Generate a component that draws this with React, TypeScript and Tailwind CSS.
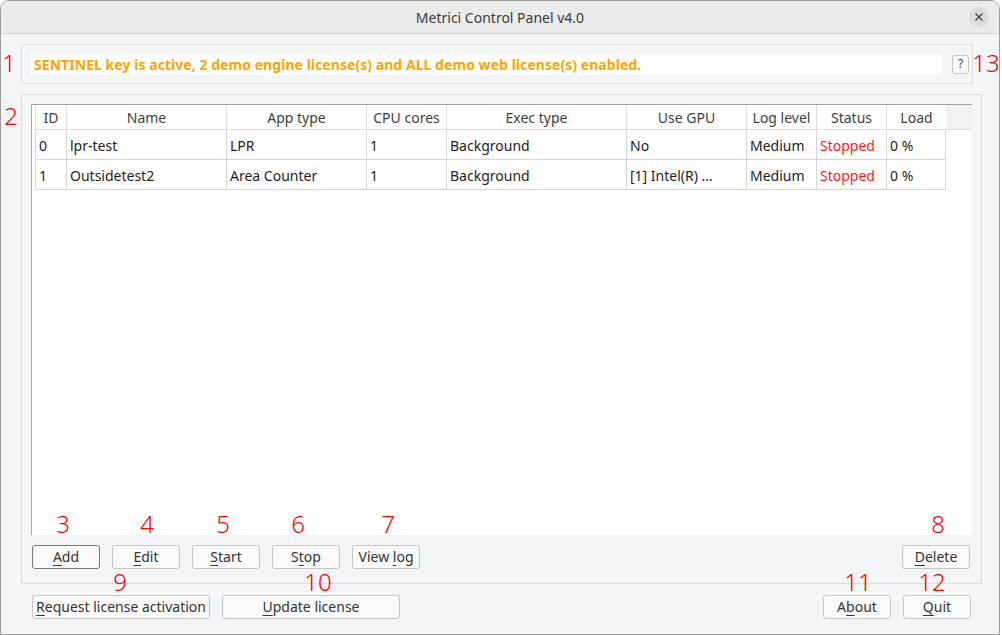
import React from 'react';

const FONT = { fontFamily: '"Noto Sans", "Open Sans", sans-serif' };

type Row = { id: string; name: string; app: string; cpu: string; exec: string; gpu: string; log: string; status: string; load: string };

const rows: Row[] = [
  { id: '0', name: 'lpr-test', app: 'LPR', cpu: '1', exec: 'Background', gpu: 'No', log: 'Medium', status: 'Stopped', load: '0 %' },
  { id: '1', name: 'Outsidetest2', app: 'Area Counter', cpu: '1', exec: 'Background', gpu: '[1] Intel(R) …', log: 'Medium', status: 'Stopped', load: '0 %' },
];

const cols = [
  { key: 'id', label: 'ID', w: 'w-[31px]' },
  { key: 'name', label: 'Name', w: 'w-[160px]' },
  { key: 'app', label: 'App type', w: 'w-[140px]' },
  { key: 'cpu', label: 'CPU cores', w: 'w-[80px]' },
  { key: 'exec', label: 'Exec type', w: 'w-[180px]' },
  { key: 'gpu', label: 'Use GPU', w: 'w-[120px]' },
  { key: 'log', label: 'Log level', w: 'w-[70px]' },
  { key: 'status', label: 'Status', w: 'w-[70px]' },
  { key: 'load', label: 'Load', w: 'w-[60px]' },
] as const;

// label with one underlined mnemonic letter
const Btn = ({ pre, u, post, w, primary }: { pre?: string; u: string; post?: string; w: string; primary?: boolean }) => (
  <button
    className={`${w} h-[24px] shrink-0 rounded-[3px] border bg-[#fafafa] text-[14px] leading-none text-[#353535] flex items-center justify-center ${
      primary ? 'border-[#7a7a7a]' : 'border-[#c6c6c6]'
    }`}
  >
    <span>
      {pre}
      <span className="underline underline-offset-[3px]">{u}</span>
      {post}
    </span>
  </button>
);

const Mark = ({ n, x, y }: { n: string; x: number; y: number }) => (
  <span
    className="absolute -translate-x-1/2 text-[24px] leading-none font-light text-[#ff0000]"
    style={{ left: x, top: y }}
  >
    {n}
  </span>
);

export default function App() {
  return (
    <div style={FONT} className="relative w-[1002px] h-[635px] overflow-hidden">
      <div className="w-[1000px] h-[635px] flex flex-col border border-[#9e9e9e] rounded-t-[9px] overflow-hidden bg-[#f4f5f6]">
        {/* title bar */}
        <div className="relative h-[33px] shrink-0 bg-[#ebebeb] border-b border-[#d3d3d3] flex items-center justify-center text-[14px] text-[#3a3a3a]">
          Metrici Control Panel v4.0
          <div className="absolute right-[10px] top-[6px] w-[20px] h-[20px] rounded-full bg-[#dcdcdc] flex items-center justify-center">
            <svg width="8" height="8" viewBox="0 0 8 8">
              <path d="M0.5 0.5 L7.5 7.5 M7.5 0.5 L0.5 7.5" stroke="#3a3a3a" strokeWidth="1.2" />
            </svg>
          </div>
        </div>

        <div className="flex-1 pl-[20px] pt-[10px]">
          {/* license status */}
          <div className="w-[952px] h-[40px] border border-[#dcdddf] flex items-center pl-[9px]">
            <div className="w-[911px] h-[21px] bg-white flex items-center pl-[3px] text-[14px] font-bold text-[#ffa400] tracking-[0.05px] whitespace-nowrap">
              SENTINEL key is active, 2 demo engine license(s) and ALL demo web license(s) enabled.
            </div>
            <div className="ml-[10px] w-[17px] h-[19px] rounded-[3px] border border-[#c6c6c6] bg-[#fafafa] flex items-center justify-center text-[12px] text-[#444]">
              ?
            </div>
          </div>

          {/* engines group */}
          <div className="mt-[10px] w-[961px] h-[490px] border border-[#dcdddf] pl-[9px] pr-[11px] pt-[9px] flex flex-col">
            <div className="w-[941px] h-[431px] bg-white border-l border-t border-[#a5a5a5] pl-[3px] text-[14px]">
              <div className="flex h-[25px] border-b border-[#dcdcdc] text-[#3f3f3f]">
                {cols.map((c) => (
                  <div key={c.key} className={`${c.w} shrink-0 border-l border-[#dcdcdc] flex items-center justify-center whitespace-nowrap`}>
                    {c.label}
                  </div>
                ))}
                <div className="flex-1 bg-[#f2f2f2]" />
              </div>
              {rows.map((r) => (
                <div key={r.id} className="flex h-[30px] w-[911px] border-b border-[#d6d6d6] text-[#1e1e1e]">
                  {cols.map((c) => (
                    <div
                      key={c.key}
                      className={`${c.w} shrink-0 border-l border-[#d6d6d6] flex items-center pl-[3px] pt-[1px] whitespace-nowrap last:border-r ${
                        c.key === 'status' ? 'text-[#ff1a1a]' : ''
                      }`}
                    >
                      {r[c.key]}
                    </div>
                  ))}
                </div>
              ))}
            </div>
            <div className="mt-[10px] pl-[1px] flex gap-[12px]">
              <Btn w="w-[68px]" u="A" post="dd" primary />
              <Btn w="w-[68px]" u="E" post="dit" />
              <Btn w="w-[68px]" u="S" post="tart" />
              <Btn w="w-[68px]" pre="S" u="t" post="op" />
              <Btn w="w-[68px]" pre="View " u="l" post="og" />
              <div className="ml-auto">
                <Btn w="w-[68px]" u="D" post="elete" />
              </div>
            </div>
          </div>

          {/* bottom row */}
          <div className="mt-[11px] w-[950px] pl-[11px] flex gap-[12px]">
            <Btn w="w-[178px]" u="R" post="equest license activation" />
            <Btn w="w-[178px]" u="U" post="pdate license" />
            <div className="ml-auto flex gap-[12px]">
              <Btn w="w-[68px]" pre="A" u="b" post="out" />
              <Btn w="w-[68px]" u="Q" post="uit" />
            </div>
          </div>
        </div>
      </div>

      {/* annotation numbers */}
      <Mark n="1" x={9} y={51} />
      <Mark n="13" x={986} y={51} />
      <Mark n="2" x={11} y={104} />
      <Mark n="3" x={63} y={512} />
      <Mark n="4" x={147} y={512} />
      <Mark n="5" x={223} y={512} />
      <Mark n="6" x={298} y={512} />
      <Mark n="7" x={388} y={512} />
      <Mark n="8" x={938} y={512} />
      <Mark n="9" x={120} y={570} />
      <Mark n="10" x={318} y={570} />
      <Mark n="11" x={858} y={570} />
      <Mark n="12" x={932} y={570} />
    </div>
  );
}
